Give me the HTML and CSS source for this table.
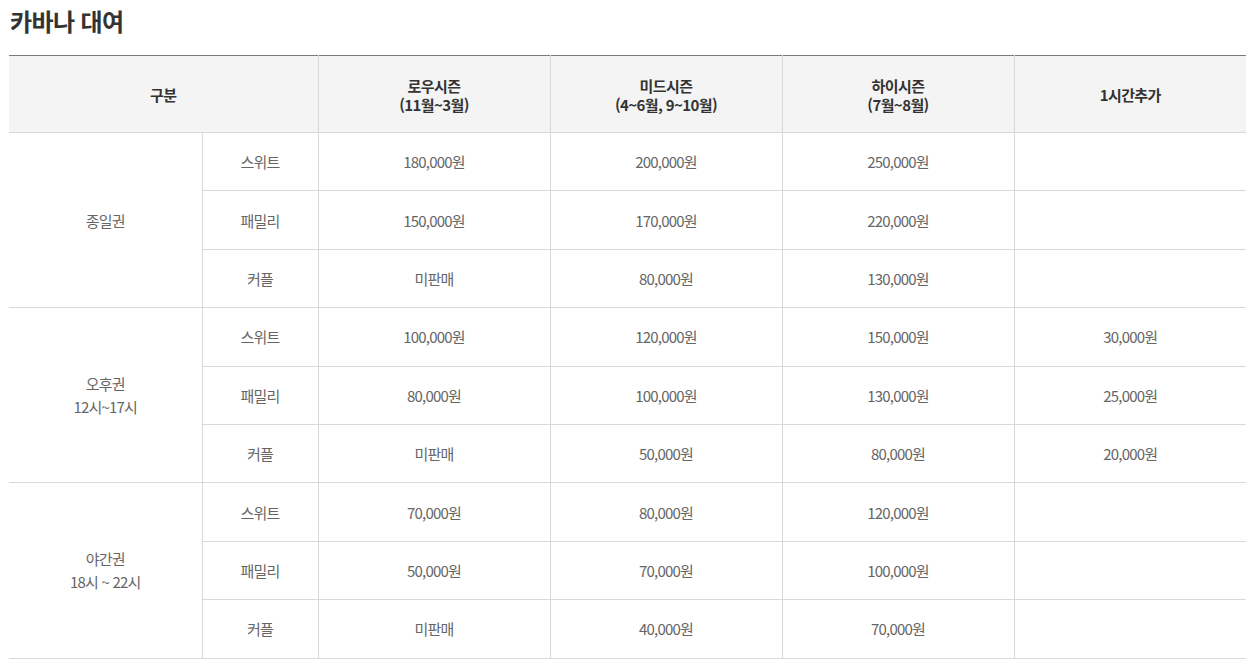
FILE: index.html
```html
<!DOCTYPE html>
<html lang="ko">
<head>
<meta charset="utf-8">
<title>카바나 대여</title>
<link rel="stylesheet" href="styles.css">
</head>
<body>
<div class="page">
  <h1 class="title">카바나 대여</h1>
  <table class="price">
    <colgroup>
      <col class="c1"><col class="c2"><col class="c3"><col class="c3"><col class="c3"><col class="c3">
    </colgroup>
    <thead>
      <tr>
        <th colspan="2">구분</th>
        <th>로우시즌<br>(11월~3월)</th>
        <th>미드시즌<br>(4~6월, 9~10월)</th>
        <th>하이시즌<br>(7월~8월)</th>
        <th>1시간추가</th>
      </tr>
    </thead>
    <tbody>
      <tr><td rowspan="3" class="grp">종일권</td><td>스위트</td><td>180,000원</td><td>200,000원</td><td>250,000원</td><td></td></tr>
      <tr><td>패밀리</td><td>150,000원</td><td>170,000원</td><td>220,000원</td><td></td></tr>
      <tr><td>커플</td><td>미판매</td><td>80,000원</td><td>130,000원</td><td></td></tr>
      <tr><td rowspan="3" class="grp">오후권<br>12시~17시</td><td>스위트</td><td>100,000원</td><td>120,000원</td><td>150,000원</td><td>30,000원</td></tr>
      <tr><td>패밀리</td><td>80,000원</td><td>100,000원</td><td>130,000원</td><td>25,000원</td></tr>
      <tr><td>커플</td><td>미판매</td><td>50,000원</td><td>80,000원</td><td>20,000원</td></tr>
      <tr><td rowspan="3" class="grp">야간권<br>18시 ~ 22시</td><td>스위트</td><td>70,000원</td><td>80,000원</td><td>120,000원</td><td></td></tr>
      <tr><td>패밀리</td><td>50,000원</td><td>70,000원</td><td>100,000원</td><td></td></tr>
      <tr><td>커플</td><td>미판매</td><td>40,000원</td><td>70,000원</td><td></td></tr>
    </tbody>
  </table>
</div>
</body>
</html>
```
FILE: styles.css
```css
html, body {
  margin: 0;
  padding: 0;
  background: #fff;
}
body {
  font-family: "Noto Sans CJK KR", "Noto Sans", sans-serif;
  color: #333;
}
.page {
  padding: 0 11px 0 9px;
}
.title {
  margin: 0;
  padding: 4px 0 0 1px;
  height: 55px;
  box-sizing: border-box;
  font-size: 24px;
  line-height: 34px;
  font-weight: 700;
  color: #333;
  letter-spacing: -0.6px;
}
.price {
  width: 1237px;
  border-collapse: collapse;
  table-layout: fixed;
  border-top: 1px solid #7a7a7a;
}
.c1 { width: 193px; }
.c2 { width: 116px; }
.c3 { width: 232px; }
.price th {
  background: #f4f4f4;
  height: 75px;
  padding: 1px 0 0;
  font-size: 15px;
  line-height: 19px;
  font-weight: 700;
  color: #333;
  letter-spacing: -0.6px;
  border-left: 1px solid #d9d9d9;
  border-bottom: 1px solid #d9d9d9;
  vertical-align: middle;
}
.price th:first-child { border-left: 0; }
.price td {
  height: 57.4px;
  padding: 0;
  text-align: center;
  vertical-align: middle;
  font-size: 15px;
  line-height: 23px;
  font-weight: 400;
  color: #666;
  letter-spacing: -0.8px;
  border-left: 1px solid #d9d9d9;
  border-bottom: 1px solid #d9d9d9;
}
.price td.grp { border-left: 0; }
```
